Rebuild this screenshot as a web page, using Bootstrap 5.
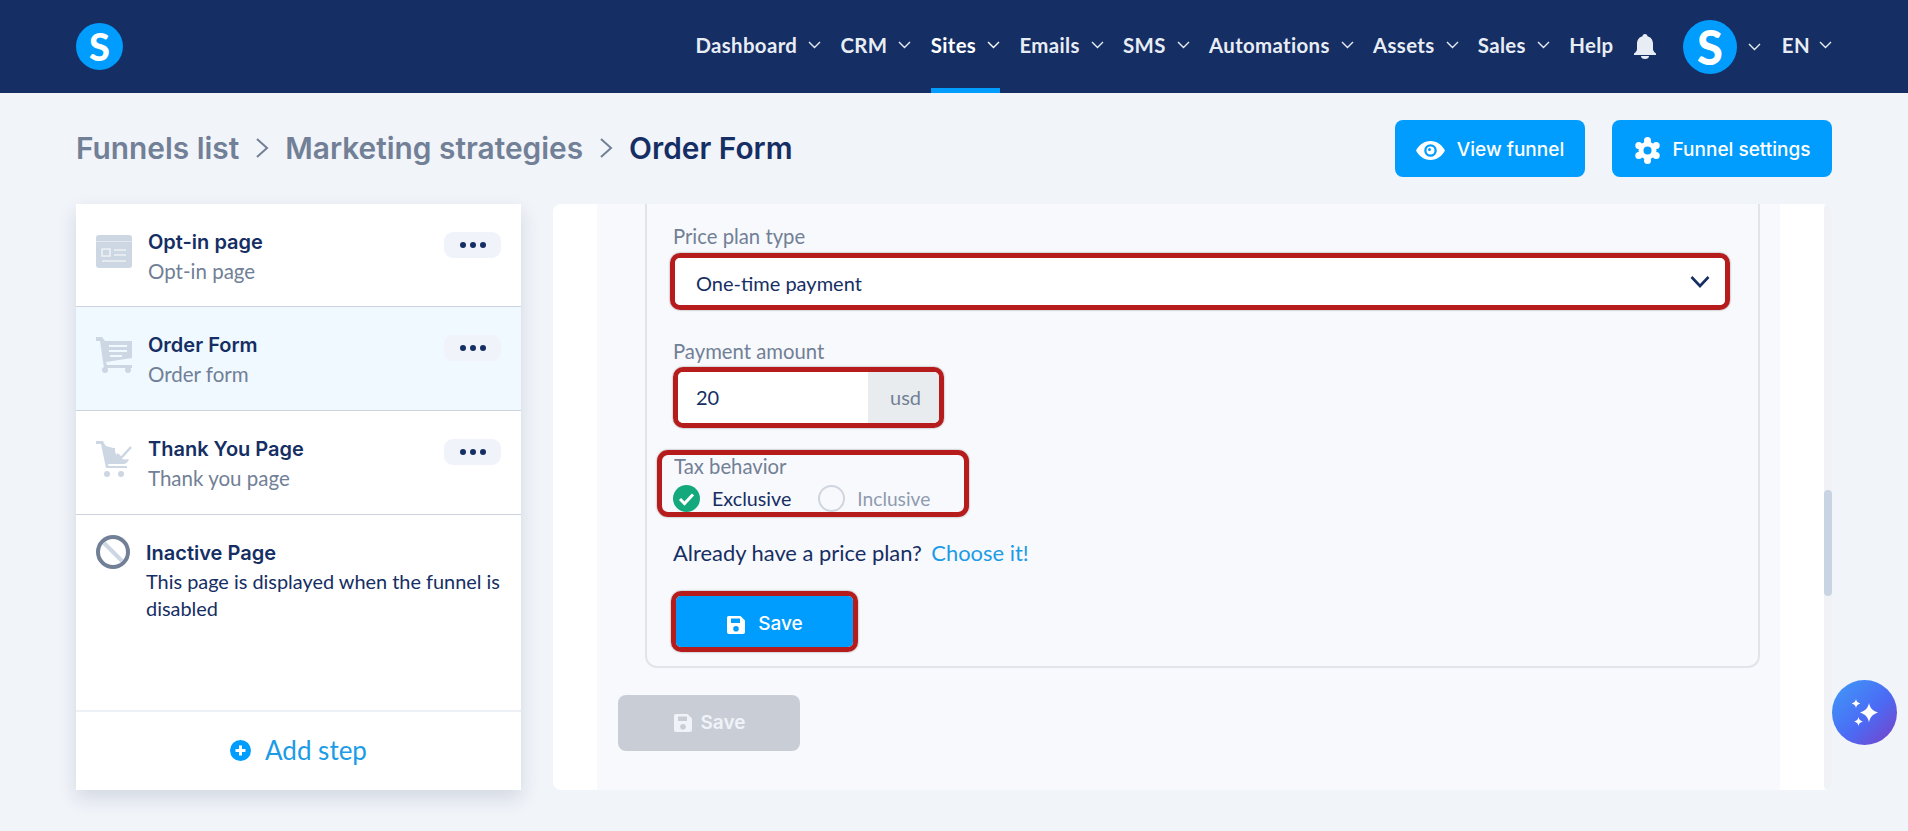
<!DOCTYPE html>
<html lang="en">
<head>
    <meta charset="UTF-8">
    <meta name="viewport" content="width=device-width, initial-scale=1.0">
    <title>Order Form</title>
    <link href="https://cdn.jsdelivr.net/npm/bootstrap@5.3.0/dist/css/bootstrap.min.css" rel="stylesheet">
    <style>
        body {
            background: #f1f4f9;
            color: #152e63;
            font-family: "Lato", "Liberation Sans", sans-serif;
            font-size: 20px;
            height: 831px;
            overflow: hidden;
        }
        .top-bar {
            background: #152e63;
            height: 93px;
            padding: 0 76px;
        }
        .logo-dot {
            width: 47px;
            height: 47px;
            border-radius: 50%;
            background: #009dff;
            color: #fff;
            font: 900 38px/47px "Lato", sans-serif;
            text-align: center;
        }
        .menu-item {
            height: 93px;
            color: #e8edf5;
            font-weight: 700;
            font-size: 20.4px;
            letter-spacing: .35px;
            gap: 11px;
            border-bottom: 5px solid transparent;
            padding-top: 2px;
            margin-right: 19.3px;
            text-decoration: none;
        }
        .menu-item.is-active { color: #fff; border-bottom-color: #009dff; }
        .menu-item.is-last { margin-right: 0; gap: 9px; }
        .chev { width: 13px; height: 8px; flex: none; }
        .bell-icon { margin: 0 27px 0 1px; }
        .avatar-dot {
            width: 54px;
            height: 54px;
            border-radius: 50%;
            background: #009dff;
            color: #fff;
            font: 900 47px/54px "Lato", sans-serif;
            text-align: center;
            margin-right: 11px;
        }
        .avatar-chev { color: #e8edf5; margin-right: 21px; }
        .head-row { padding: 27px 76px; height: 111px; }
        .crumbs { font-family: "Inter", sans-serif; font-size: 29.85px; font-weight: 600; color: #718096; gap: 16px; }
        .crumbs b { font-weight: 600; color: #152e63; }
        .blue-btn {
            background: #009dff;
            border: 0;
            border-radius: 8px;
            color: #fff;
            font-family: "Inter", sans-serif;
            font-weight: 500;
            font-size: 19px;
            height: 57px;
            gap: 12px;
        }
        .blue-btn:hover, .blue-btn:focus { background: #009dff; color: #fff; }
        .head-btns { gap: 27px; }
        .view-btn { width: 190px; padding-top: 9px; }
        .settings-btn { width: 220px; padding-top: 9px; }
        .content-row { padding: 0 76px; gap: 32px; height: 586px; }
        .steps-card {
            width: 445px;
            background: #fff;
            box-shadow: 0 8px 18px rgba(30, 50, 90, .14);
        }
        .step-row {
            height: 104px;
            padding: 26px 20px 0;
            border-bottom: 1px solid #cbd3df;
            gap: 16px;
        }
        .step-row.is-first { height: 103px; }
        .step-row.is-current { background: #f0f9ff; }
        .step-icon { width: 36px; height: 36px; flex: none; margin-top: 4px; }
        .step-title { font-family: "Inter", sans-serif; font-weight: 600; font-size: 20px; line-height: 24px; }
        .step-sub { color: #718096; font-size: 20.5px; line-height: 24px; margin-top: 5px; }
        .dots-btn {
            width: 57px;
            height: 26px;
            margin-top: 2px;
            margin-left: auto;
            border-radius: 9px;
            background: #f0f3f9;
            gap: 4px;
        }
        .dots-btn i { width: 6px; height: 6px; border-radius: 50%; background: #152e63; }
        .inactive-row { height: 195px; padding: 26px 20px 0; gap: 16px; }
        .inactive-row .step-icon { margin-top: -6px; width: 34px; height: 34px; }
        .inactive-row p { font-size: 19.9px; line-height: 27px; margin: 3px 0 0; }
        .add-row {
            height: 80px;
            border-top: 2px solid #edf0f4;
            color: #1c9be6;
            font-size: 26px;
            gap: 14px;
            padding-bottom: 2px;
        }
        .main-panel {
            width: 1279px;
            background: #fff;
            border-radius: 8px;
            overflow: hidden;
            padding-left: 44px;
        }
        .form-col { width: 1183px; background: #f8f9fc; padding: 0 21px 0 48px; }
        .spacer-col { width: 44px; }
        .bar-track { width: 8px; background: #f1f2f5; border-radius: 4px; }
        .bar-thumb { width: 8px; height: 106px; margin-top: 286px; background: #c9d4e2; border-radius: 4px; }
        .plan-box {
            width: 1115px;
            height: 464px;
            padding: 19px 0 0 26px;
            border: 2px solid #e1e4e9;
            border-top: 0;
            border-radius: 0 0 12px 12px;
        }
        .field-label { color: #718096; font-size: 20.3px; line-height: 26px; }
        .mark-box {
            border: 5px solid #b71c1c;
            border-radius: 10px;
            box-shadow: 0 0 2px rgba(0, 0, 0, .45);
        }
        .select-mark { width: 1060px; height: 57px; margin: 4px 0 0 -3px; }
        .select-mark .form-select {
            height: 47px;
            border: 0;
            border-radius: 5px;
            color: #152e63;
            font-size: 20px;
            padding: 7px 40px 5px 21px;
            background-size: 20px 14px;
            background-position: right 15px center;
            background-image: url("data:image/svg+xml,%3Csvg xmlns='http://www.w3.org/2000/svg' viewBox='0 0 20 14'%3E%3Cpath d='M1.500 2l8.500 9 8.500-9' fill='none' stroke='%23152e63' stroke-width='2.6'/%3E%3C/svg%3E");
        }
        .amount-mark { width: 271px; height: 61px; margin: 3px 0 0 0; overflow: hidden; }
        .amount-mark .input-group { height: 51px; }
        .amount-mark .form-control {
            border: 0;
            border-radius: 0;
            color: #152e63;
            font-size: 20px;
            padding: 4px 12px 6px 18px;
        }
        .amount-mark .input-group-text {
            width: 72px;
            justify-content: center;
            border: 0;
            border-left: 1px solid #dfe3e8;
            border-radius: 0;
            background: #e9ecef;
            color: #718096;
            font-size: 20px;
            padding: 0 0 2px 4px;
        }
        .tax-mark { width: 312px; height: 67px; margin: 22px 0 0 -16px; padding: 0 0 0 12px; border-radius: 11px; }
        .tax-mark .field-label { line-height: 24px; margin-top: -1px; }
        .tax-opts { font-size: 19.7px; line-height: 27px; margin-left: -1px; margin-top: 7px; }
        .tax-opts span { display: block; }
        .tax-off { color: #8f9bb0; font-size: 19.2px; }
        .ring { width: 27px; height: 27px; flex: none; }
        .ring-gap { margin-left: 27px; }
        .have-plan { font-size: 21.9px; margin-top: 23px; line-height: 26px; }
        .have-plan a { color: #1c9be6; text-decoration: none; margin-left: 4px; }
        .save-mark { width: 187px; height: 61px; margin: 25px 0 0 -2px; }
        .save-btn { width: 177px; height: 51px; border-radius: 5px; padding: 12px 0 6px; }
        .grey-save { width: 182px; height: 56px; margin: 27px 0 0 -27px; border-radius: 8px; border: 0; font-family: "Inter", sans-serif; font-size: 19px; font-weight: 600; }
        .grey-save:disabled { background: #c9ced6; color: #f0f3f9; opacity: 1; }
        .ai-fab {
            position: absolute;
            left: 1832px;
            top: 680px;
            width: 65px;
            height: 65px;
            border-radius: 50%;
            background: linear-gradient(135deg, #3f9bf8 0%, #4b6bf5 55%, #7a3fc4 100%);
        }
    </style>
</head>
<body>
    <svg width="0" height="0" class="position-absolute">
        <symbol id="chev" viewBox="0 0 13 8"><path d="M1 1l5.5 5.5L12 1" fill="none" stroke="currentColor" stroke-width="1.4"/></symbol>
        <symbol id="floppy" viewBox="0 0 20 20"><path fill="currentColor" d="M2.5 1h12L19 5.500V17a2 2 0 0 1-2 2H3a2 2 0 0 1-2-2V2.500A1.500 1.500 0 0 1 2.500 1zM5 3.500V8h9V3.500zM10 11a2.800 2.800 0 1 0 0 5.600A2.800 2.800 0 0 0 10 11z" fill-rule="evenodd"/></symbol>
    </svg>

    <header class="top-bar d-flex align-items-center justify-content-between">
        <div class="logo-dot">S</div>
        <nav class="d-flex align-items-center">
            <a class="menu-item d-flex align-items-center" href="#">Dashboard <svg class="chev"><use href="#chev"/></svg></a>
            <a class="menu-item d-flex align-items-center" href="#">CRM <svg class="chev"><use href="#chev"/></svg></a>
            <a class="menu-item d-flex align-items-center is-active" href="#">Sites <svg class="chev"><use href="#chev"/></svg></a>
            <a class="menu-item d-flex align-items-center" href="#">Emails <svg class="chev"><use href="#chev"/></svg></a>
            <a class="menu-item d-flex align-items-center" href="#">SMS <svg class="chev"><use href="#chev"/></svg></a>
            <a class="menu-item d-flex align-items-center" href="#">Automations <svg class="chev"><use href="#chev"/></svg></a>
            <a class="menu-item d-flex align-items-center" href="#">Assets <svg class="chev"><use href="#chev"/></svg></a>
            <a class="menu-item d-flex align-items-center" href="#">Sales <svg class="chev"><use href="#chev"/></svg></a>
            <a class="menu-item d-flex align-items-center" href="#">Help</a>
            <svg class="bell-icon" width="22" height="25" viewBox="0 0 22 25"><path fill="#e8edf5" d="M11 0c1.300 0 2.300.9 2.500 2.200C17 3.200 19 6 19 10v5c0 1.500 1 3 3 4.500V21H0v-1.500C2 18 3 16.500 3 15v-5c0-4 2-6.800 5.500-7.800C8.700.9 9.700 0 11 0zM7 22h8c0 1.700-1.500 3-4 3s-4-1.300-4-3z"/></svg>
            <div class="avatar-dot">S</div>
            <svg class="chev avatar-chev"><use href="#chev"/></svg>
            <a class="menu-item is-last d-flex align-items-center" href="#">EN <svg class="chev"><use href="#chev"/></svg></a>
        </nav>
    </header>

    <div class="head-row d-flex align-items-center justify-content-between">
        <div class="crumbs d-flex align-items-center">
            <span>Funnels list</span>
            <svg width="14" height="22" viewBox="0 0 14 22"><path d="M2 2l10 9-10 9" fill="none" stroke="#718096" stroke-width="2"/></svg>
            <span>Marketing strategies</span>
            <svg width="14" height="22" viewBox="0 0 14 22"><path d="M2 2l10 9-10 9" fill="none" stroke="#718096" stroke-width="2"/></svg>
            <b>Order Form</b>
        </div>
        <div class="d-flex head-btns">
            <button class="btn blue-btn view-btn d-flex align-items-center justify-content-center" type="button">
                <svg width="29" height="19" viewBox="0 0 29 19"><path fill="#fff" fill-rule="evenodd" d="M14.500 0C21 0 26 4 29 9.500 26 15 21 19 14.500 19S3 15 0 9.500C3 4 8 0 14.500 0zm0 3.200a6.300 6.300 0 1 0 0 12.600 6.300 6.300 0 0 0 0-12.600zm0 2.300a4 4 0 1 1 0 8 4 4 0 0 1 0-8zm-1 1.500a1.500 1.500 0 1 0 0 3 1.500 1.500 0 0 0 0-3z"/></svg>
                View funnel
            </button>
            <button class="btn blue-btn settings-btn d-flex align-items-center justify-content-center" type="button">
                <svg width="27" height="27" viewBox="0 0 27 27">
                    <g fill="#fff">
                        <circle cx="13.500" cy="13.500" r="9"/>
                        <circle cx="13.500" cy="3.500" r="3.500"/><circle cx="13.500" cy="23.500" r="3.500"/>
                        <circle cx="4.800" cy="8.500" r="3.500"/><circle cx="22.200" cy="8.500" r="3.500"/>
                        <circle cx="4.800" cy="18.500" r="3.500"/><circle cx="22.200" cy="18.500" r="3.500"/>
                    </g>
                    <circle cx="13.500" cy="13.500" r="4" fill="#009dff"/>
                </svg>
                Funnel settings
            </button>
        </div>
    </div>

    <div class="content-row d-flex">
        <aside class="steps-card d-flex flex-column">
            <div class="step-row is-first d-flex">
                <svg class="step-icon" viewBox="0 0 36 34"><rect width="36" height="33" rx="3" fill="#cdd6e3"/><rect y="6" width="36" height="1" fill="#e3e8ef"/><path d="M6 14h8v7H6zM18 15h12M18 20h12M6 26h24" fill="none" stroke="#eef1f6" stroke-width="1.600"/></svg>
                <div>
                    <div class="step-title">Opt-in page</div>
                    <div class="step-sub">Opt-in page</div>
                </div>
                <div class="dots-btn d-flex align-items-center justify-content-center"><i></i><i></i><i></i></div>
            </div>
            <div class="step-row is-current d-flex">
                <svg class="step-icon" viewBox="0 0 36 36"><path fill="#cdd6e3" d="M0 0h6l3 4h27v17L10 25l1 3h25v3H8L4 4H0zM13 8v2h18V8zM13 13v2h18v-2zM14 18v2h12v-2z" fill-rule="evenodd"/><circle cx="9" cy="33" r="3" fill="#cdd6e3"/><circle cx="32" cy="33" r="3" fill="#cdd6e3"/></svg>
                <div>
                    <div class="step-title">Order Form</div>
                    <div class="step-sub">Order form</div>
                </div>
                <div class="dots-btn d-flex align-items-center justify-content-center"><i></i><i></i><i></i></div>
            </div>
            <div class="step-row d-flex">
                <svg class="step-icon" viewBox="0 0 36 36"><path fill="#cdd6e3" d="M0 0h7l2 4c1 1 7 3 10 3-1 7 5 13 14 11-1 3-3 5-6 5H12l.5 2H31v2H10L5 3H0z"/><path d="M21 13l4 4 10-11" fill="none" stroke="#cdd6e3" stroke-width="2.500"/><circle cx="11" cy="33" r="3" fill="#cdd6e3"/><circle cx="25" cy="33" r="3" fill="#cdd6e3"/></svg>
                <div>
                    <div class="step-title">Thank You Page</div>
                    <div class="step-sub">Thank you page</div>
                </div>
                <div class="dots-btn d-flex align-items-center justify-content-center"><i></i><i></i><i></i></div>
            </div>
            <div class="inactive-row d-flex">
                <svg class="step-icon" viewBox="0 0 34 34"><path d="M8 8l18 18" stroke="#cdd6e3" stroke-width="4"/><circle cx="17" cy="17" r="15" fill="none" stroke="#718096" stroke-width="4"/></svg>
                <div>
                    <div class="step-title">Inactive Page</div>
                    <p>This page is displayed when the funnel is disabled</p>
                </div>
            </div>
            <div class="add-row d-flex align-items-center justify-content-center">
                <svg width="21" height="21" viewBox="0 0 21 21"><circle cx="10.500" cy="10.500" r="10.500" fill="#009dff"/><path d="M10.500 5.500v10M5.500 10.500h10" stroke="#fff" stroke-width="3"/></svg>
                Add step
            </div>
        </aside>

        <main class="main-panel d-flex">
            <div class="form-col">
                <div class="plan-box">
                    <label class="field-label d-block">Price plan type</label>
                    <div class="mark-box select-mark">
                        <select class="form-select"><option>One-time payment</option></select>
                    </div>
                    <label class="field-label d-block mt-4 pt-1">Payment amount</label>
                    <div class="mark-box amount-mark">
                        <div class="input-group">
                            <input type="text" class="form-control" value="20">
                            <span class="input-group-text">usd</span>
                        </div>
                    </div>
                    <div class="mark-box tax-mark">
                        <div class="field-label">Tax behavior</div>
                        <div class="tax-opts d-flex align-items-center">
                            <svg class="ring me-2" viewBox="0 0 27 27"><circle cx="13.500" cy="13.500" r="13.500" fill="#14a97c"/><path d="M7 14l4.500 4.500L20 9.500" fill="none" stroke="#fff" stroke-width="3"/></svg>
                            <span class="ms-1">Exclusive</span>
                            <svg class="ring ring-gap me-2" viewBox="0 0 27 27"><circle cx="13.500" cy="13.500" r="12.500" fill="none" stroke="#cfd5df" stroke-width="2"/></svg>
                            <span class="tax-off ms-1">Inclusive</span>
                        </div>
                    </div>
                    <div class="have-plan">Already have a price plan? <a href="#">Choose it!</a></div>
                    <div class="mark-box save-mark">
                        <button class="btn blue-btn save-btn d-flex align-items-center justify-content-center" type="button">
                            <svg width="20" height="20"><use href="#floppy"/></svg>
                            Save
                        </button>
                    </div>
                </div>
                <button class="btn grey-save d-flex align-items-center justify-content-center gap-2" type="button" disabled>
                    <svg width="20" height="20"><use href="#floppy"/></svg>
                    Save
                </button>
            </div>
            <div class="spacer-col"></div>
            <div class="bar-track"><div class="bar-thumb"></div></div>
        </main>
    </div>

    <div class="ai-fab d-flex align-items-center justify-content-center">
        <svg width="30" height="30" viewBox="0 0 30 30"><path fill="#fff" d="M19 5c1 5 3.500 7.500 9 9.500-5.500 2-8 4.500-9 10-1-5.500-3.500-8-9-10 5.500-2 8-4.500 9-9.500zM6 1c.5 2.500 1.800 3.800 4.300 4.500C7.800 6.200 6.500 7.500 6 10c-.5-2.500-1.800-3.800-4.300-4.500C4.200 4.800 5.500 3.500 6 1zM8.500 19c.5 2.500 1.800 3.800 4.300 4.500-2.500.7-3.800 2-4.300 4.500-.5-2.500-1.800-3.800-4.300-4.500 2.500-.7 3.800-2 4.300-4.500z"/></svg>
    </div>

    <script src="https://cdn.jsdelivr.net/npm/bootstrap@5.3.0/dist/js/bootstrap.bundle.min.js"></script>
</body>
</html>
